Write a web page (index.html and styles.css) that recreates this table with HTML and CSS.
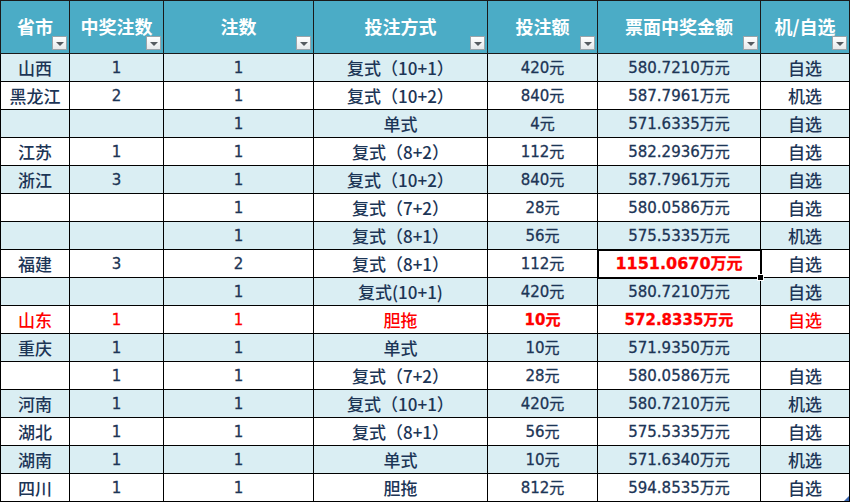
FILE: index.html
```html
<!DOCTYPE html>
<html lang="zh-CN">
<head>
<meta charset="utf-8">
<title>中奖统计</title>
<link rel="stylesheet" href="styles.css">
</head>
<body>
<table class="sheet">
  <colgroup>
    <col class="w1"><col class="w2"><col class="w3"><col class="w4"><col class="w5"><col class="w6"><col class="w7">
  </colgroup>
  <thead>
    <tr>
      <th><span class="title">省市</span><span class="filter"></span></th>
      <th><span class="title">中奖注数</span><span class="filter"></span></th>
      <th><span class="title">注数</span><span class="filter"></span></th>
      <th><span class="title">投注方式</span><span class="filter"></span></th>
      <th><span class="title">投注额</span><span class="filter"></span></th>
      <th><span class="title">票面中奖金额</span><span class="filter"></span></th>
      <th><span class="title">机/自选</span><span class="filter"></span></th>
    </tr>
  </thead>
  <tbody>
    <tr><td class="txt">山西</td><td class="num">1</td><td class="num">1</td><td class="txt">复式（10+1）</td><td class="num">420元</td><td class="num">580.7210万元</td><td class="txt">自选</td></tr>
    <tr><td class="txt">黑龙江</td><td class="num">2</td><td class="num">1</td><td class="txt">复式（10+2）</td><td class="num">840元</td><td class="num">587.7961万元</td><td class="txt">机选</td></tr>
    <tr><td class="txt"></td><td class="num"></td><td class="num">1</td><td class="txt">单式</td><td class="num">4元</td><td class="num">571.6335万元</td><td class="txt">自选</td></tr>
    <tr><td class="txt">江苏</td><td class="num">1</td><td class="num">1</td><td class="txt">复式（8+2）</td><td class="num">112元</td><td class="num">582.2936万元</td><td class="txt">自选</td></tr>
    <tr><td class="txt">浙江</td><td class="num">3</td><td class="num">1</td><td class="txt">复式（10+2）</td><td class="num">840元</td><td class="num">587.7961万元</td><td class="txt">自选</td></tr>
    <tr><td class="txt"></td><td class="num"></td><td class="num">1</td><td class="txt">复式（7+2）</td><td class="num">28元</td><td class="num">580.0586万元</td><td class="txt">自选</td></tr>
    <tr><td class="txt"></td><td class="num"></td><td class="num">1</td><td class="txt">复式（8+1）</td><td class="num">56元</td><td class="num">575.5335万元</td><td class="txt">机选</td></tr>
    <tr><td class="txt">福建</td><td class="num">3</td><td class="num">2</td><td class="txt">复式（8+1）</td><td class="num">112元</td><td class="num sel big">1151.0670万元</td><td class="txt">自选</td></tr>
    <tr><td class="txt"></td><td class="num"></td><td class="num">1</td><td class="txt">复式(10+1)</td><td class="num">420元</td><td class="num">580.7210万元</td><td class="txt">自选</td></tr>
    <tr class="hit"><td class="txt">山东</td><td class="num">1</td><td class="num">1</td><td class="txt">胆拖</td><td class="num strong">10元</td><td class="num strong">572.8335万元</td><td class="txt">自选</td></tr>
    <tr><td class="txt">重庆</td><td class="num">1</td><td class="num">1</td><td class="txt">单式</td><td class="num">10元</td><td class="num">571.9350万元</td><td class="txt"></td></tr>
    <tr><td class="txt"></td><td class="num">1</td><td class="num">1</td><td class="txt">复式（7+2）</td><td class="num">28元</td><td class="num">580.0586万元</td><td class="txt">自选</td></tr>
    <tr><td class="txt">河南</td><td class="num">1</td><td class="num">1</td><td class="txt">复式（10+1）</td><td class="num">420元</td><td class="num">580.7210万元</td><td class="txt">机选</td></tr>
    <tr><td class="txt">湖北</td><td class="num">1</td><td class="num">1</td><td class="txt">复式（8+1）</td><td class="num">56元</td><td class="num">575.5335万元</td><td class="txt">自选</td></tr>
    <tr><td class="txt">湖南</td><td class="num">1</td><td class="num">1</td><td class="txt">单式</td><td class="num">10元</td><td class="num">571.6340万元</td><td class="txt">机选</td></tr>
    <tr><td class="txt">四川</td><td class="num">1</td><td class="num">1</td><td class="txt">胆拖</td><td class="num">812元</td><td class="num">594.8535万元</td><td class="txt last">自选</td></tr>
  </tbody>
</table>
</body>
</html>
```
FILE: styles.css
```css
html, body {
  margin: 0;
  padding: 0;
  background: #ffffff;
}

.sheet {
  border-collapse: collapse;
  table-layout: fixed;
  width: 849px;
  font-family: "Noto Sans CJK SC", "DejaVu Sans", sans-serif;
  color: #1c3556;
}

.w1 { width: 69px; }
.w2 { width: 94px; }
.w3 { width: 150px; }
.w4 { width: 174px; }
.w5 { width: 110px; }
.w6 { width: 163px; }
.w7 { width: 89px; }

.sheet th {
  position: relative;
  height: 53px;
  padding: 0 0 2px 0;
  background: #4bacc6;
  border: 1px solid #1a1a1a;
  color: #ffffff;
  font-size: 18px;
  font-weight: bold;
  text-align: center;
  vertical-align: middle;
  box-sizing: border-box;
}

.title {
  position: relative;
  z-index: 0;
}

.filter {
  position: absolute;
  right: 2px;
  bottom: 3px;
  width: 13px;
  height: 12px;
  border: 1px solid #9aa4aa;
  background: linear-gradient(#ffffff, #e6e9eb);
  z-index: 1;
}

.filter::after {
  content: "";
  position: absolute;
  left: 3px;
  top: 5px;
  border-left: 4px solid transparent;
  border-right: 4px solid transparent;
  border-top: 4px solid #555b60;
}

.sheet td {
  height: 28px;
  padding: 0;
  border: 1px solid #000000;
  text-align: center;
  vertical-align: middle;
  white-space: nowrap;
  line-height: 26px;
  box-sizing: border-box;
}

.sheet tbody tr:nth-child(odd) td {
  background: #daeef3;
}

.sheet tbody tr:nth-child(even) td {
  background: #ffffff;
}

.txt {
  font-size: 17px;
  font-weight: 500;
  font-family: "Noto Sans CJK SC", sans-serif;
}

.num {
  font-size: 15px;
  font-family: "DejaVu Sans", "Noto Sans CJK SC", sans-serif;
  -webkit-text-stroke: 0.3px currentColor;
}

.hit td {
  color: #ff0000;
}

.strong {
  font-weight: bold;
}

.big {
  color: #ff0000;
  font-weight: bold;
  font-size: 16px;
}

.sheet td.sel {
  position: relative;
  outline: 2px solid #000000;
  outline-offset: -1px;
  background: #ffffff;
}

.sel::after {
  content: "";
  position: absolute;
  right: -4px;
  bottom: -4px;
  width: 5px;
  height: 5px;
  background: #000000;
  border: 1px solid #ffffff;
  z-index: 2;
}

.sheet td.last {
  position: relative;
}

.last::after {
  content: "";
  position: absolute;
  right: 0;
  bottom: 0;
  width: 0;
  height: 0;
  border-left: 5px solid transparent;
  border-bottom: 5px solid #3a66b0;
}
```
